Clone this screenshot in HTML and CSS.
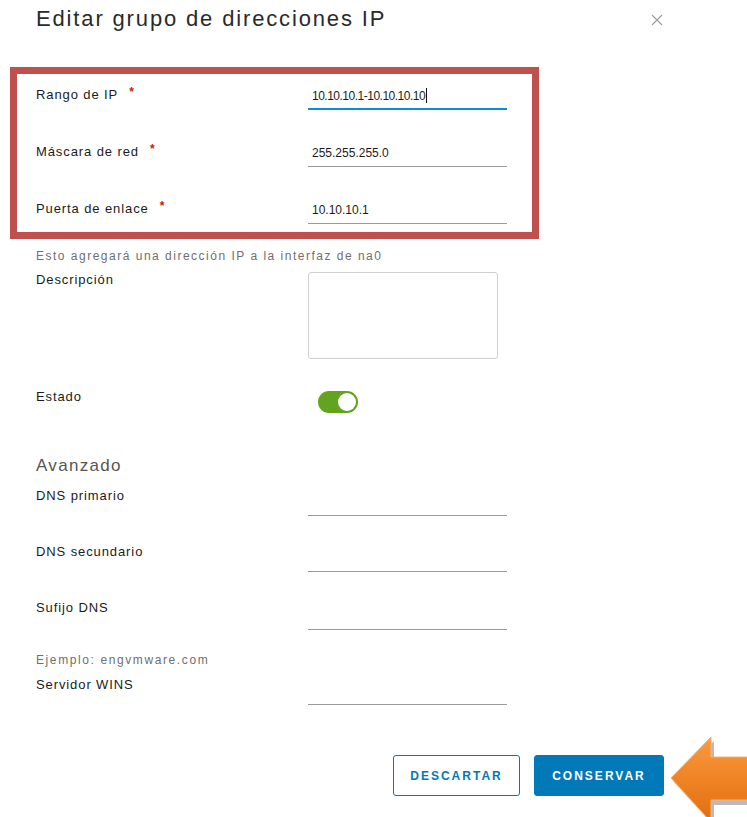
FILE: index.html
```html
<!DOCTYPE html>
<html lang="es">
<head>
<meta charset="utf-8">
<title>Editar grupo de direcciones IP</title>
<link rel="stylesheet" href="styles.css">
</head>
<body>
<div class="dialog">
  <header class="dialog-header">
    <h1 class="dialog-title">Editar grupo de direcciones IP</h1>
    <button class="close" aria-label="Cerrar">
      <svg width="12" height="12" viewBox="0 0 12 12"><path d="M1 1 L11 11 M11 1 L1 11" stroke="#9a9a9a" stroke-width="1.1" fill="none"/></svg>
    </button>
  </header>

  <section class="highlight">
    <div class="row">
      <label class="label">Rango de IP<span class="req">*</span></label>
      <div class="field active">10.10.10.1-10.10.10.10<span class="caret"></span></div>
    </div>
    <div class="row">
      <label class="label">Máscara de red<span class="req">*</span></label>
      <div class="field">255.255.255.0</div>
    </div>
    <div class="row">
      <label class="label">Puerta de enlace<span class="req">*</span></label>
      <div class="field">10.10.10.1</div>
    </div>
  </section>

  <div class="body">
    <p class="hint hint-ip">Esto agregará una dirección IP a la interfaz de na0</p>
    <div class="row row-desc">
      <label class="label">Descripción</label>
      <div class="textarea"></div>
    </div>
    <div class="row row-state">
      <label class="label">Estado</label>
      <div class="toggle"><span class="knob"></span></div>
    </div>

    <h2 class="section-title">Avanzado</h2>
    <div class="row">
      <label class="label">DNS primario</label>
      <div class="field"></div>
    </div>
    <div class="row row-next">
      <label class="label">DNS secundario</label>
      <div class="field"></div>
    </div>
    <div class="row row-next">
      <label class="label">Sufijo DNS</label>
      <div class="field field-tall"></div>
    </div>
    <p class="hint hint-example">Ejemplo: engvmware.com</p>
    <div class="row row-wins">
      <label class="label">Servidor WINS</label>
      <div class="field"></div>
    </div>
  </div>

  <footer class="dialog-footer">
    <button class="btn btn-outline">DESCARTAR</button>
    <button class="btn btn-primary">CONSERVAR</button>
  </footer>

  <svg class="pointer" width="90" height="90" viewBox="0 0 90 90">
    <defs>
      <linearGradient id="orange" x1="0" y1="0" x2="0" y2="1">
        <stop offset="0" stop-color="#fa9a3f"/>
        <stop offset="1" stop-color="#e36d0c"/>
      </linearGradient>
    </defs>
    <path d="M14 52 L54 11 L54 31 L93 31 L93 75 L54 75 L54 96 Z" fill="#9c9c9c" opacity="0.7"/>
    <path d="M11 48 L51 7 L51 27 L90 27 L90 70 L51 70 L51 92 Z" fill="url(#orange)" stroke="#f8b36e" stroke-width="1"/>
  </svg>
</div>
</body>
</html>
```

FILE: styles.css
```css
* { box-sizing: border-box; }

html, body {
  margin: 0;
  padding: 0;
  background: #ffffff;
}

body {
  font-family: "Liberation Sans", Arial, sans-serif;
  color: #1b1b1b;
  width: 747px;
  height: 817px;
  overflow: hidden;
}

.dialog {
  position: relative;
  height: 817px;
}

/* header */
.dialog-header {
  display: flex;
  align-items: center;
  justify-content: space-between;
  padding: 5px 84px 0 36px;
  height: 40px;
}

.dialog-title {
  margin: 0;
  font-size: 22px;
  font-weight: normal;
  line-height: 28px;
  color: #2a2a2a;
  letter-spacing: 1.85px;
  align-self: flex-start;
}

.close {
  border: 0;
  background: none;
  padding: 0;
  width: 12px;
  height: 12px;
  margin-top: -6px;
  display: flex;
}

/* red outlined group */
.highlight {
  margin: 27px 0 0 10px;
  width: 529px;
  border: 7px solid #c0504d;
  padding: 10px 24px 8px 19px;
  display: flex;
  flex-direction: column;
  gap: 31px;
}

/* form rows */
.row {
  display: grid;
  grid-template-columns: 272px 199px;
  align-items: start;
}

.label {
  font-size: 13px;
  line-height: 16px;
  letter-spacing: 0.9px;
  color: #1b1b1b;
}

.req {
  color: #c92100;
  font-size: 12px;
  font-weight: bold;
  margin-left: 11px;
  vertical-align: 3px;
}

.field {
  height: 26px;
  padding: 4px 0 0 4px;
  font-size: 12px;
  line-height: 16px;
  color: #1b1b1b;
  border-bottom: 1px solid #9a9a9a;
  white-space: nowrap;
}

.body .field { height: 28px; }
.body .field-tall { height: 30px; }

.field.active {
  border-bottom: 2px solid #0a8fd6;
  letter-spacing: -0.5px;
}

.caret {
  display: inline-block;
  width: 1px;
  height: 15px;
  background: #111;
  vertical-align: -3px;
  margin-left: 1px;
}

.body {
  padding: 0 0 0 36px;
}

.hint {
  margin: 0;
  font-size: 12px;
  line-height: 16px;
  color: #6f6f6f;
  letter-spacing: 1.5px;
}

.hint-ip { margin-top: 9px; }

.row-desc { margin-top: 8px; }

.textarea {
  width: 190px;
  height: 87px;
  border: 1px solid #cfcfcf;
  border-radius: 3px;
}

.row-state { margin-top: 30px; }

.toggle {
  margin: 2px 0 0 10px;
  width: 40px;
  height: 22px;
  border-radius: 11px;
  background: #62a420;
  position: relative;
}

.knob {
  position: absolute;
  right: 2px;
  top: 2px;
  width: 18px;
  height: 18px;
  border-radius: 50%;
  background: #ffffff;
}

.section-title {
  margin: 42px 0 0;
  font-size: 17px;
  line-height: 21px;
  font-weight: normal;
  color: #565656;
  letter-spacing: 1.3px;
}

.section-title + .row { margin-top: 12px; }

.row-next { margin-top: 28px; }

.hint-example { margin-top: 22px; letter-spacing: 1.6px; }

.row-wins { margin-top: 9px; }

/* footer buttons */
.dialog-footer {
  display: flex;
  justify-content: flex-end;
  gap: 14px;
  margin-top: 50px;
  padding-right: 83px;
}

.btn {
  height: 41px;
  border-radius: 3px;
  font-family: "Liberation Sans", Arial, sans-serif;
  font-size: 12px;
  font-weight: bold;
  letter-spacing: 2px;
  padding: 0;
  cursor: pointer;
}

.btn-outline {
  width: 127px;
  background: #ffffff;
  color: #0079b8;
  border: 1px solid #0079b8;
}

.btn-primary {
  width: 130px;
  background: #0079b8;
  color: #ffffff;
  border: 1px solid #0079b8;
}

/* callout arrow laid over the footer */
.pointer {
  position: absolute;
  left: 660px;
  top: 730px;
  overflow: visible;
}
```
